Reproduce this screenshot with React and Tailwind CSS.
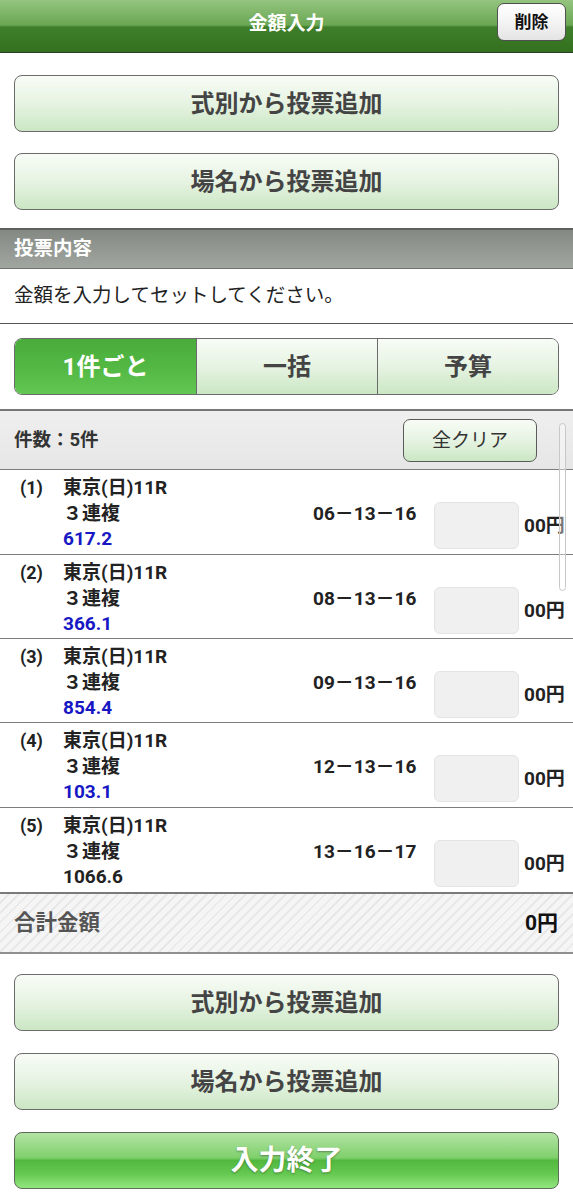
import React from "react";

const rows = [
  { no: "(1)", combo: "06－13－16", odds: "617.2", blue: true, h: "h-[85px]" },
  { no: "(2)", combo: "08－13－16", odds: "366.1", blue: true, h: "h-[84px]" },
  { no: "(3)", combo: "09－13－16", odds: "854.4", blue: true, h: "h-[84px]" },
  { no: "(4)", combo: "12－13－16", odds: "103.1", blue: true, h: "h-[85px]" },
  { no: "(5)", combo: "13－16－17", odds: "1066.6", blue: false, h: "h-[84px]" },
];

function LightButton({ children }) {
  return (
    <div className="h-[57px] rounded-[8px] border border-[#6b6b6b] bg-[image:linear-gradient(to_bottom,#f8fcf6_0%,#e6f3e2_50%,#cbe7c4_100%)] flex items-center justify-center text-[24px] font-bold text-[#444] leading-none">
      {children}
    </div>
  );
}

export default function App() {
  return (
    <div className="w-[573px] bg-white font-['Roboto','Noto_Sans_CJK_JP',sans-serif] text-[#222]">
      {/* Header */}
      <div className="relative h-[53px] border-b border-[#2c3f26] bg-[image:linear-gradient(to_bottom,#94c47f_0%,#6ba754_48%,#3f7f2b_52%,#33701f_100%)] flex items-center justify-center">
        <span className="text-white font-bold text-[19px] leading-none -mt-[6px]">金額入力</span>
        <div className="absolute right-[7px] top-[3px] w-[69px] h-[38px] rounded-[7px] border border-[#505050] bg-[image:linear-gradient(to_bottom,#ffffff_0%,#f4f4f4_50%,#e4e4e4_100%)] flex items-center justify-center text-[17px] font-bold text-[#111] leading-none">
          削除
        </div>
      </div>

      {/* Top buttons */}
      <div className="px-[14px] pt-[22px] pb-[18px] flex flex-col gap-[21px]">
        <LightButton>式別から投票追加</LightButton>
        <LightButton>場名から投票追加</LightButton>
      </div>

      {/* Section header */}
      <div className="h-[41px] border-t-2 border-b border-t-[#5e605d] border-b-[#6f726e] bg-[image:linear-gradient(to_bottom,#848983_0%,#a1a6a0_100%)] flex items-center px-[14px]">
        <span className="text-white font-bold text-[19.5px] leading-none">投票内容</span>
      </div>

      {/* Instruction */}
      <div className="h-[55px] border-b border-[#555] flex items-center px-[14px]">
        <span className="text-[19.5px] leading-none text-[#222]">金額を入力してセットしてください。</span>
      </div>

      {/* Tabs */}
      <div className="px-[14px] pt-[14px] pb-[14px]">
        <div className="h-[57px] rounded-[8px] border border-[#6b6b6b] overflow-hidden flex">
          <div className="w-[181px] bg-[image:linear-gradient(to_bottom,#49ab3b_0%,#52b843_50%,#62c752_100%)] flex items-center justify-center text-white text-[24px] font-bold leading-none">
            1件ごと
          </div>
          <div className="w-[181px] border-l border-[#6b6b6b] bg-[image:linear-gradient(to_bottom,#f8fcf6_0%,#e6f3e2_50%,#cbe7c4_100%)] flex items-center justify-center text-[#444] text-[24px] font-bold leading-none">
            一括
          </div>
          <div className="flex-1 border-l border-[#6b6b6b] bg-[image:linear-gradient(to_bottom,#f8fcf6_0%,#e6f3e2_50%,#cbe7c4_100%)] flex items-center justify-center text-[#444] text-[24px] font-bold leading-none">
            予算
          </div>
        </div>
      </div>

      {/* List */}
      <div className="relative border-t-2 border-[#777]">
        <div className="h-[59px] border-b border-[#7d7d7d] bg-[image:linear-gradient(to_bottom,#efefef_0%,#e6e6e6_100%)] flex items-center justify-between pl-[14px] pr-[36px]">
          <span className="text-[18.5px] font-bold text-[#333] leading-none">件数：5件</span>
          <div className="w-[134px] h-[43px] rounded-[7px] border border-[#5a5a5a] bg-[image:linear-gradient(to_bottom,#f8fcf6_0%,#e6f3e2_50%,#cbe7c4_100%)] flex items-center justify-center text-[19px] text-[#333] leading-none">
            全クリア
          </div>
        </div>

        {rows.map((r, i) => (
          <div
            key={i}
            className={`${r.h} flex pl-[20px] ${i < rows.length - 1 ? "border-b border-[#7d7d7d]" : ""}`}
          >
            <div className="w-[43px] pt-[5px] text-[18px] font-bold leading-[26px]">{r.no}</div>
            <div className="w-[250px] pt-[5px] flex flex-col text-[19px] font-bold leading-[25.5px]">
              <span>東京(日)11R</span>
              <span>３連複</span>
              <span className={r.blue ? "text-[#1717c4]" : "text-[#222]"}>{r.odds}</span>
            </div>
            <div className="w-[121px] pt-[31px] text-[19px] font-bold leading-[26px]">{r.combo}</div>
            <div className="flex items-center gap-[5px] mt-[32px] self-start">
              <div className="w-[85px] h-[47px] rounded-[6px] bg-[#f0f0f0] border border-[#e4e4e4]" />
              <span className="text-[19px] font-bold leading-none">00円</span>
            </div>
          </div>
        ))}

        {/* Scrollbar overlay */}
        <div className="absolute right-[7px] top-[12px] w-[7px] h-[168px] rounded-full border border-[#c8c8c8] bg-white/40" />
      </div>

      {/* Total */}
      <div className="h-[62px] border-t-2 border-b-2 border-t-[#7a7a7a] border-b-[#8f8f8f] bg-[image:repeating-linear-gradient(-45deg,#f5f5f5_0px,#f5f5f5_5px,#e8e8e8_5px,#e8e8e8_7px)] flex items-center justify-between pl-[14px] pr-[15px]">
        <span className="text-[21.5px] font-bold text-[#555] leading-none">合計金額</span>
        <span className="text-[21px] font-bold text-[#111] leading-none">0円</span>
      </div>

      {/* Bottom buttons */}
      <div className="px-[14px] pt-[20px] pb-[11px] flex flex-col gap-[22px]">
        <LightButton>式別から投票追加</LightButton>
        <LightButton>場名から投票追加</LightButton>
        <div className="h-[57px] rounded-[8px] border border-[#5b6b57] bg-[image:linear-gradient(to_bottom,#b3e3a4_0%,#7fd06c_45%,#52b83e_50%,#66c952_75%,#93e67f_100%)] flex items-center justify-center text-white text-[28px] font-bold leading-none [text-shadow:0_1px_2px_rgba(0,0,0,0.35)]">
          入力終了
        </div>
      </div>
    </div>
  );
}
